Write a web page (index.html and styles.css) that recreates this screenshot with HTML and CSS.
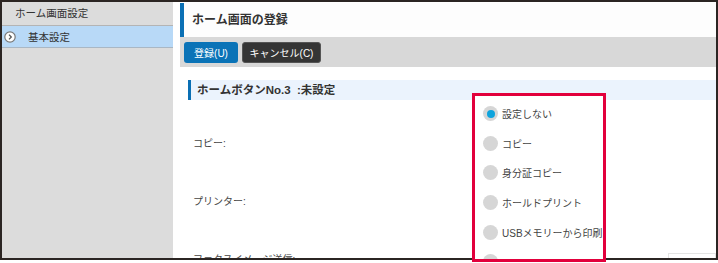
FILE: index.html
```html
<!DOCTYPE html>
<html lang="ja">
<head>
    <meta charset="UTF-8">
    <title>ホーム画面の登録</title>
    <link rel="stylesheet" href="styles.css">
</head>
<body>
    <div class="screen">
        <div class="frame">
            <div class="sidebar">
                <div class="side-title">ホーム画面設定</div>
                <div class="side-item selected">
                    <svg class="side-icon" width="12" height="12" viewBox="0 0 12 12">
                        <circle cx="6" cy="6" r="5.2" fill="#fff" stroke="#777" stroke-width="1.2"/>
                        <path d="M5 3.6 L7.3 6 L5 8.4" fill="none" stroke="#555" stroke-width="1.3"/>
                    </svg>
                    <span>基本設定</span>
                </div>
            </div>

            <div class="main">
                <div class="page-title">ホーム画面の登録</div>
                <div class="toolbar">
                    <button class="btn btn-primary">登録(U)</button>
                    <button class="btn btn-dark">キャンセル(C)</button>
                </div>
                <div class="section-title">ホームボタンNo.3 &nbsp;:未設定</div>
                <div class="rows">
                    <div class="row">コピー:</div>
                    <div class="row">プリンター:</div>
                    <div class="row">ファクスイメージ送信:<span class="field"></span></div>
                </div>
            </div>
        </div>

        <!-- dropdown opened over the form -->
        <div class="dropdown">
            <div class="option checked"><span class="radio"></span>設定しない</div>
            <div class="option"><span class="radio"></span>コピー</div>
            <div class="option"><span class="radio"></span>身分証コピー</div>
            <div class="option"><span class="radio"></span>ホールドプリント</div>
            <div class="option"><span class="radio"></span>USBメモリーから印刷</div>
            <div class="option"><span class="radio"></span></div>
        </div>
    </div>
</body>
</html>
```

FILE: styles.css
```css
body {
    margin: 0;
    padding: 0;
    background-color: #fff;
    font-family: "Liberation Sans", "Noto Sans CJK JP", sans-serif;
    color: #333;
}
.screen {
    position: relative;
    width: 718px;
    height: 263px;
}
.frame {
    width: 718px;
    height: 260px;
    box-sizing: border-box;
    border: 2px solid #2b2523;
    display: flex;
    overflow: hidden;
    background-color: #fff;
}
.sidebar {
    width: 171px;
    flex-shrink: 0;
    background-color: #dcdcdc;
    margin-right: 7px;
}
.side-title {
    height: 23px;
    line-height: 23px;
    padding-left: 13px;
    font-size: 10.5px;
    border-bottom: 1px solid #b4b4b4;
}
.side-item {
    height: 21px;
    display: flex;
    align-items: center;
    font-size: 10.5px;
    border-bottom: 1px solid #a9b7c4;
}
.side-item.selected {
    background-color: #b8d9f7;
}
.side-icon {
    margin-left: 2px;
    margin-right: 12px;
}
.main {
    flex: 1;
}
.page-title {
    margin-top: 1px;
    height: 34px;
    line-height: 34px;
    border-left: 4px solid #0a6fb4;
    padding-left: 8px;
    font-size: 12px;
    font-weight: bold;
    background-color: #fdfdfd;
}
.toolbar {
    height: 30px;
    background-color: #d8d8d8;
    display: flex;
    align-items: center;
    gap: 4px;
    padding-left: 4px;
}
.btn {
    height: 21px;
    border: none;
    border-radius: 3px;
    color: #fff;
    font-family: "Liberation Sans", "Noto Sans CJK JP", sans-serif;
    font-size: 10px;
    padding: 0;
    margin: 0;
}
.btn-primary {
    width: 54px;
    background-color: #0a73b7;
}
.btn-dark {
    width: 79px;
    background-color: #353535;
    border: 1px solid #555;
}
.section-title {
    margin-top: 13px;
    margin-left: 8px;
    height: 20px;
    line-height: 20px;
    border-left: 3px solid #0a6fb4;
    padding-left: 6px;
    background-color: #ebf3fd;
    font-size: 11.5px;
    font-weight: bold;
}
.rows {
    padding-top: 13px;
    padding-left: 13px;
}
.row {
    height: 58px;
    display: flex;
    align-items: center;
    font-size: 10px;
    color: #444;
}
.field {
    margin-left: auto;
    width: 46px;
    height: 20px;
    border: 1px solid #e4e4e4;
    margin-top: 12px;
}
.dropdown {
    position: absolute;
    left: 472px;
    top: 93px;
    width: 134px;
    height: 169px;
    box-sizing: border-box;
    border: 3px solid #e2003c;
    background-color: #fff;
    padding-top: 3px;
    overflow: hidden;
}
.option {
    height: 29.6px;
    display: flex;
    align-items: center;
    padding-left: 8px;
    font-size: 10px;
    color: #444;
}
.radio {
    width: 15px;
    height: 15px;
    border-radius: 50%;
    background-color: #d6d6d6;
    margin-right: 4px;
    display: flex;
    align-items: center;
    justify-content: center;
    flex-shrink: 0;
}
.option.checked .radio::after {
    content: "";
    width: 8px;
    height: 8px;
    border-radius: 50%;
    background-color: #0fa4dd;
}
```
